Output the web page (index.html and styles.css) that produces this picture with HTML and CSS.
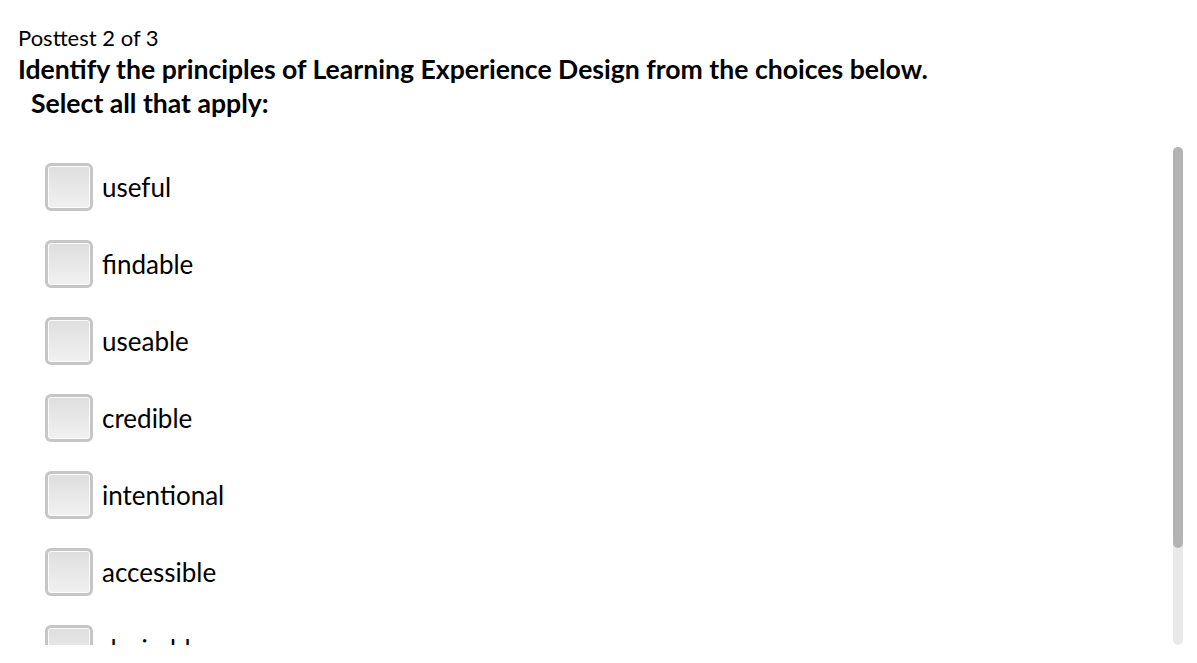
FILE: index.html
```html
<!DOCTYPE html>
<html>
<head>
<meta charset="utf-8">
<link rel="stylesheet" href="styles.css">
</head>
<body>
<div class="header">
  <div class="counter">Posttest 2 of 3</div>
  <div class="question">Identify the principles of Learning Experience Design from the choices below.</div>
  <div class="instruction">Select all that apply:</div>
</div>
<div class="pane">
  <div class="choices">
    <label class="choice"><span class="box"></span><span class="label">useful</span></label>
    <label class="choice"><span class="box"></span><span class="label">findable</span></label>
    <label class="choice"><span class="box"></span><span class="label">useable</span></label>
    <label class="choice"><span class="box"></span><span class="label">credible</span></label>
    <label class="choice"><span class="box"></span><span class="label">intentional</span></label>
    <label class="choice"><span class="box"></span><span class="label">accessible</span></label>
    <label class="choice"><span class="box"></span><span class="label">desirable</span></label>
  </div>
  <div class="scrollbar"><div class="thumb"></div></div>
</div>
</body>
</html>
```
FILE: styles.css
```css
html, body {
  margin: 0;
  padding: 0;
  background: #fff;
  overflow: hidden;
}
body {
  font-family: Lato, "Open Sans", sans-serif;
  color: #000;
}
.header {
  padding: 25px 0 0 18px;
}
.counter {
  font-size: 22px;
  line-height: 26px;
}
.question {
  font-size: 26.6px;
  font-weight: bold;
  line-height: 32px;
  padding-top: 2px;
}
.instruction {
  font-size: 26.6px;
  font-weight: bold;
  line-height: 32px;
  padding: 2px 0 0 13px;
}
.pane {
  display: flex;
  margin-top: 28px;
  height: 498px;
}
.choices {
  flex: 1;
  overflow: hidden;
  padding: 16px 0 0 45px;
}
.scrollbar {
  width: 10px;
  margin-right: 14px;
  background: #e9e9e9;
  border-radius: 5px;
  flex: none;
}
.thumb {
  height: 401px;
  background: #b3b3b3;
  border-radius: 5px;
}
.choice {
  display: flex;
  align-items: center;
  gap: 9px;
  height: 48px;
  margin-bottom: 29px;
}
.box {
  width: 48px;
  height: 48px;
  box-sizing: border-box;
  border: 3px solid #c6c6c6;
  border-radius: 6px;
  background: linear-gradient(#dedede, #f1f1f1);
  box-shadow: inset 0 0 0 1px #fbfbfb;
  flex: none;
}
.label {
  font-size: 26px;
  line-height: 30px;
}
```
